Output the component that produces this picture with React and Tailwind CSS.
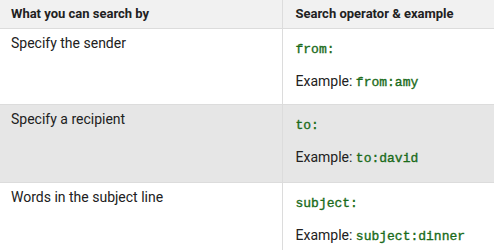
const ROWS = [
  { label: 'Specify the sender', op: 'from:', example: 'from:amy', shade: false, h: 'h-[76px]' },
  { label: 'Specify a recipient', op: 'to:', example: 'to:david', shade: true, h: 'h-[78px]' },
  { label: 'Words in the subject line', op: 'subject:', example: 'subject:dinner', shade: false, h: 'h-[70px]' },
]

function Code({ children }) {
  return (
    <code className="font-['Liberation_Mono',monospace] text-[13px] font-normal text-[#1a6b1a] [-webkit-text-stroke:0.35px_#1a6b1a]">
      {children}
    </code>
  )
}

export default function App() {
  return (
    <div className="w-[494px] h-[250px] overflow-hidden bg-white font-['Roboto',sans-serif] text-[14px] text-[#212121]">
      <table className="w-full border-collapse table-fixed">
        <colgroup>
          <col className="w-[282px]" />
          <col />
        </colgroup>
        <thead>
          <tr className="h-[28px] bg-[#f1f1f1] border-b border-[#dcdcdc] text-[13px]">
            <th className="text-left font-bold pl-[11px] leading-[16px] align-middle">What you can search by</th>
            <th className="text-left font-bold pl-[13px] leading-[16px] align-middle border-l border-[#dcdcdc]">
              Search operator &amp; example
            </th>
          </tr>
        </thead>
        <tbody>
          {ROWS.map((r) => (
            <tr key={r.op} className={`${r.h} border-b border-[#dcdcdc] ${r.shade ? 'bg-[#e6e6e6]' : ''}`}>
              <td className="align-top pl-[11px] pt-[6px] leading-[16px]">{r.label}</td>
              <td className="align-top pl-[13px] pt-[11px] leading-[16px] border-l border-[#dcdcdc]">
                <div>
                  <Code>{r.op}</Code>
                </div>
                <div className="mt-[15px]">
                  Example: <Code>{r.example}</Code>
                </div>
              </td>
            </tr>
          ))}
        </tbody>
      </table>
    </div>
  )
}
